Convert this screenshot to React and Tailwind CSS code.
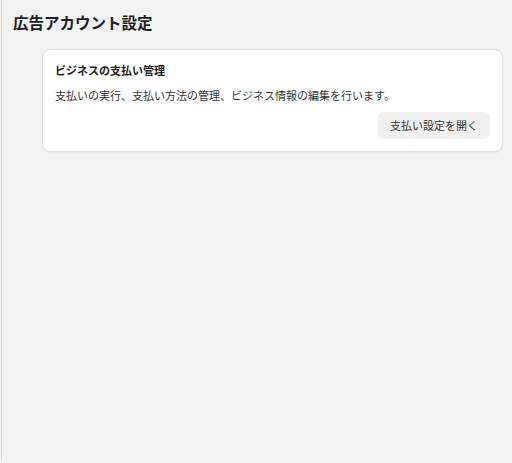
const App = () => {
  return (
    <div
      className="w-full h-[463px] bg-[#f2f2f2] text-[#1c1e21]"
      style={{ fontFamily: '"Noto Sans CJK JP", "Noto Sans", sans-serif' }}
    >
      <div className="ml-px h-[460px] border-l border-[#d3d3d3] pl-[11px] pt-3 pr-[9px]">
        <h1 className="text-[15.5px] leading-5 font-bold">広告アカウント設定</h1>

        <div className="mt-[17px] ml-[29px] rounded-lg border border-[#dddfe2] bg-white px-3 py-3 shadow-[0_1px_2px_rgba(0,0,0,0.05)]">
          <h2 className="text-[11px] leading-4 font-bold">ビジネスの支払い管理</h2>
          <p className="mt-[9px] text-[11px] leading-4 text-[#333]">
            支払いの実行、支払い方法の管理、ビジネス情報の編集を行います。
          </p>
          <div className="mt-[9px] flex justify-end">
            <button className="h-[27px] rounded-md bg-[#f0f0f0] px-3 text-[11px] text-[#333]">
              支払い設定を開く
            </button>
          </div>
        </div>
      </div>
    </div>
  );
};

export default App;
